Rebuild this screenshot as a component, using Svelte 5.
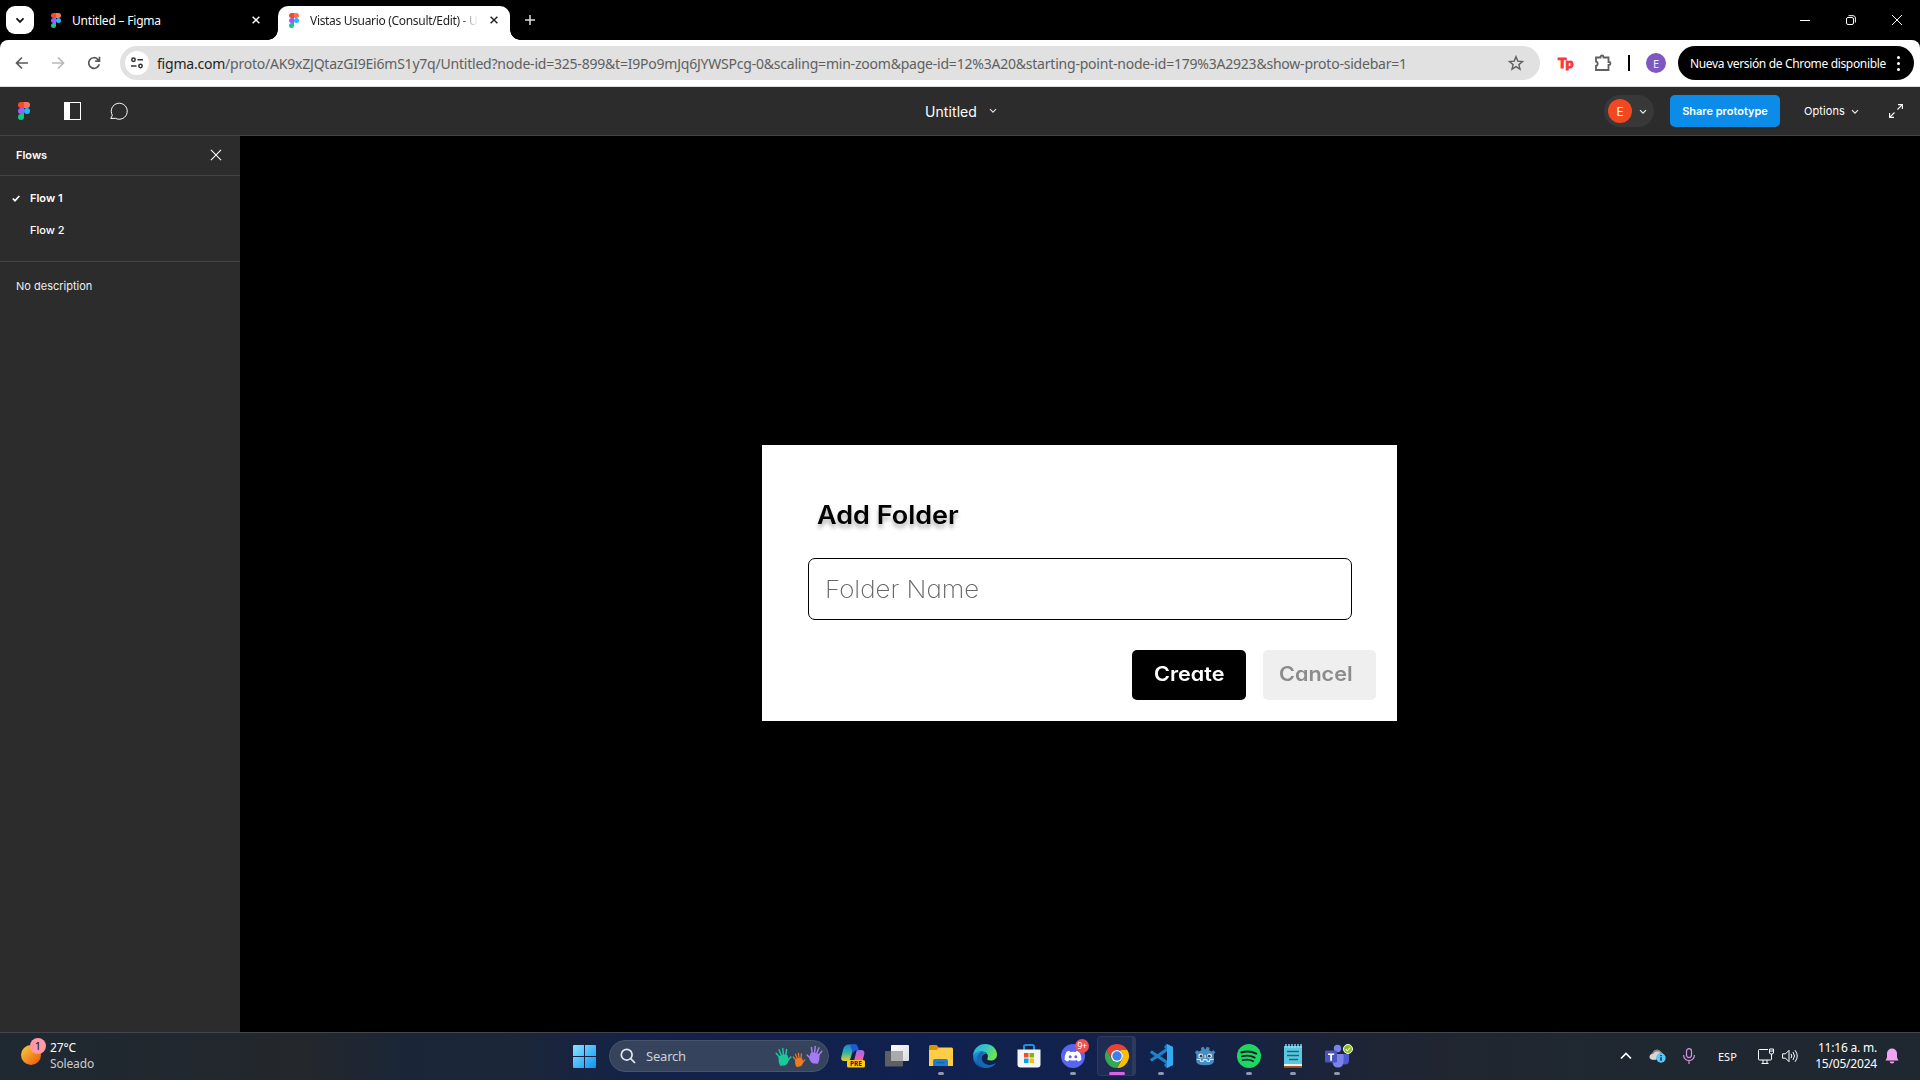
<script>
  const url = '/proto/AK9xZJQtazGI9Ei6mS1y7q/Untitled?node-id=325-899&t=I9Po9mJq6JYWSPcg-0&scaling=min-zoom&page-id=12%3A20&starting-point-node-id=179%3A2923&show-proto-sidebar=1';
  const apps = ['copilot', 'taskview', 'files', 'edge', 'store', 'discord', 'chrome', 'vscode', 'godot', 'spotify', 'notepad', 'teams'];
  const running = new Set(['files', 'discord', 'vscode', 'spotify', 'notepad', 'teams']);
</script>

{#snippet figma(cls)}
  <svg class={cls} viewBox="0 0 20 30">
    <path d="M10 0H5a5 5 0 0 0 0 10h5z" fill="#f24e1e" />
    <path d="M10 0h5a5 5 0 0 1 0 10h-5z" fill="#ff7262" />
    <path d="M10 10H5a5 5 0 0 0 0 10h5z" fill="#a259ff" />
    <circle cx="15" cy="15" r="5" fill="#1abcfe" />
    <path d="M10 20H5a5 5 0 1 0 5 5z" fill="#0acf83" />
  </svg>
{/snippet}

{#snippet cross(cls)}
  <svg class={cls} viewBox="0 0 10 10"><path d="M.8.8l8.4 8.4M9.2.8L.8 9.2" /></svg>
{/snippet}

{#snippet chevron(cls)}
  <svg class={cls} viewBox="0 0 8 6"><path d="M1 1.2l3 3 3-3" /></svg>
{/snippet}

{#snippet hand(cls)}
  <svg class={cls} viewBox="0 0 18 20">
    <path d="M5 11L1.300 6.500M6.800 9L4.300 3M9 8.500L8.200 1.500M11.500 8.500L12.200 2.500M13.500 14l3.300-3.500" />
    <path class="palm" d="M4.500 10.500q4-2.300 8-1.500l1.300 4q-.5 4.500-3.800 5.700l-4 .3q-1.800-3-1.500-8.500z" />
  </svg>
{/snippet}

<div class="screen">
  <header class="tabs">
    <button class="tab-search" aria-label="Search tabs">{@render chevron('i-tabs')}</button>
    <div class="tab">
      {@render figma('fav')}
      <span class="tab-title t1">Untitled – Figma</span>
      {@render cross('tab-x')}
    </div>
    <div class="tab active">
      {@render figma('fav')}
      <span class="tab-title t2">Vistas Usuario (Consult/Edit) - U</span>
      {@render cross('tab-x')}
    </div>
    <svg class="plus" viewBox="0 0 10 10"><path d="M5 0v10M0 5h10" /></svg>
    <div class="window">
      <svg viewBox="0 0 10 10"><path d="M0 5.500h10" /></svg>
      <svg viewBox="0 0 10 10"><rect x=".5" y="2.500" width="7" height="7" rx="1.500" /><path d="M2.500.7H7A2.400 2.400 0 0 1 9.400 3v4.500" /></svg>
      <svg viewBox="0 0 10 10"><path d="M0 0l10 10M10 0L0 10" /></svg>
    </div>
  </header>

  <div class="toolbar-wrap">
    <div class="toolbar">
      <svg class="nav" viewBox="0 0 14 14"><path d="M13 7H2M7 1.500L1.500 7 7 12.500" /></svg>
      <svg class="nav dim" viewBox="0 0 14 14"><path d="M1 7h11M7 1.500L12.500 7 7 12.500" /></svg>
      <svg class="nav" viewBox="0 0 14 14"><path d="M12.200 8.200A5.300 5.300 0 1 1 10.800 3.300L12.300 4.800M12.500.8v4.400H8.200" /></svg>
      <div class="omnibox">
        <span class="site">
          <svg viewBox="0 0 12 12"><circle cx="2.500" cy="2.800" r="1.700" /><path d="M6.500 2.800H12M0 9h5.500" /><circle cx="9.500" cy="9" r="1.700" /></svg>
        </span>
        <span class="url"><b>figma.com</b>{url}</span>
        <svg class="star" viewBox="0 0 16 16"><path d="M8 1.700l1.800 4.400 4.700.4-3.600 3.100 1.100 4.600L8 11.700l-4 2.500 1.100-4.600L1.500 6.500l4.700-.4z" /></svg>
      </div>
      <span class="tp"><i>T</i><i class="p">p</i></span>
      <svg class="puzzle" viewBox="0 0 18 18"><path d="M2 3.500h4.500V3a1.500 1.500 0 0 1 3 0v.5h5V8h.5a1.500 1.500 0 0 1 0 3h-.5v5H2v-4.200a2.200 2.200 0 0 0 0-4.300z" /></svg>
      <span class="divider"></span>
      <span class="profile">E</span>
      <div class="update"><span>Nueva versión de Chrome disponible</span><em class="dots"><i></i><i></i><i></i></em></div>
    </div>
  </div>

  <div class="proto-bar">
    {@render figma('logo')}
    <svg class="panel" viewBox="0 0 17 18"><rect x=".5" y=".5" width="16" height="17" fill="none" stroke="#fff" /><path d="M0 0h6v18H0z" fill="#fff" /></svg>
    <svg class="chat" viewBox="0 0 18 18"><path d="M.8 16.500l1.500-3.300A8 8 0 1 1 5.500 16.300z" /></svg>
    <div class="file"><span>Untitled</span>{@render chevron('i-file')}</div>
    <div class="user"><span>E</span>{@render chevron('i-sm')}</div>
    <button class="share"><span>Share prototype</span></button>
    <div class="options"><span>Options</span>{@render chevron('i-sm')}</div>
    <svg class="expand" viewBox="0 0 14 14"><path d="M9 .6h4.400V5M13.400.6L8.500 5.500M5 13.400H.6V9M.6 13.400l4.900-4.900" /></svg>
  </div>

  <main>
    <aside>
      <div class="flows-head"><strong>Flows</strong>{@render cross('close')}</div>
      <ul>
        <li class="current"><svg viewBox="0 0 8 7"><path d="M.8 3.500l2.200 2.200L7.300 1" /></svg>Flow 1</li>
        <li>Flow 2</li>
      </ul>
      <p>No description</p>
    </aside>
    <section class="canvas">
      <div class="dialog">
        <h1><span class="wide">Add Folder</span></h1>
        <div class="field"><span class="wide">Folder Name</span></div>
        <div class="actions">
          <button class="create"><span class="wide">Create</span></button>
          <button class="cancel"><span class="wide">Cancel</span></button>
        </div>
      </div>
    </section>
  </main>

  <footer>
    <div class="weather">
      <span class="sun"><b>1</b></span>
      <div><span>27°C</span><span class="soft">Soleado</span></div>
    </div>
    <div class="center">
      <svg class="win" viewBox="0 0 23 23">
        <defs><linearGradient id="wg" x2="1" y2="1"><stop stop-color="#8be4ff" /><stop offset="1" stop-color="#0a93f5" /></linearGradient></defs>
        <path fill="url(#wg)" d="M0 1q0-1 1-1h10v11H0zM12 0h10q1 0 1 1v10H12zM0 12h11v11H1q-1 0-1-1zM12 12h11v10q0 1-1 1H12z" />
      </svg>
      <div class="search">
        <svg class="lens" viewBox="0 0 16 16"><circle cx="6.700" cy="6.700" r="5.400" /><path d="M10.700 10.700l4.300 4.300" /></svg>
        <span>Search</span>
        <div class="hands">{@render hand('h1')}{@render hand('h2')}{@render hand('h3')}</div>
      </div>
      <div class="apps">
        {#each apps as app}
          <div class="app {app}" class:running={running.has(app)}>
            <svg viewBox="0 0 24 24">
              {#if app === 'copilot'}
                <defs>
                  <linearGradient id="c1" x2="0" y2="1"><stop stop-color="#1784d8" /><stop offset=".5" stop-color="#33b5a0" /><stop offset="1" stop-color="#e9d02c" /></linearGradient>
                  <linearGradient id="c2" x2="0" y2="1"><stop stop-color="#9b6df0" /><stop offset=".5" stop-color="#e45fb0" /><stop offset="1" stop-color="#ff8b62" /></linearGradient>
                </defs>
                <path fill="url(#c2)" d="M16 6h4q4 0 3.300 4l-2 8q-1 4-5 4H9q3-1 4-5l2-8q.5-2 1-3z" />
                <path fill="url(#c1)" d="M8 .5h8q-3 1-4 5l-2.500 9Q8.600 17 6 17H3q-3.500 0-2.700-4l2-8Q3.400.5 8 .5z" />
                <path fill="#2457d6" d="M9 .5h5q2.500 0 3 2.500l1 3.500h-3q-2 0-3 3z" />
                <rect x="6" y="16" width="18" height="7.500" rx="1.500" fill="#ffc814" />
                <text x="15" y="22.200" text-anchor="middle" font-size="6.500" font-weight="700" fill="#222">PRE</text>
              {:else if app === 'taskview'}
                <defs><linearGradient id="tv" x2="1" y2="1"><stop stop-color="#fff" /><stop offset="1" stop-color="#d9dadf" /></linearGradient></defs>
                <rect x="6" y="1" width="18" height="16" rx="1" fill="url(#tv)" />
                <rect x="0" y="7" width="18" height="15.500" rx="1" fill="#5d5f63" />
                <path fill="#a9aaac" d="M6 7h11q1 0 1 1v9H6z" />
              {:else if app === 'files'}
                <path fill="#d99400" d="M0 2.500Q0 1 1.500 1h6L10 3.500V8H0z" />
                <path fill="#ffce47" d="M0 6h7.500L10 3.500h12.500q1.500 0 1.500 1.500v17H0z" />
                <path fill="#1a7fd6" d="M4 22v-5q0-2 2-2h11q2 0 2 2v5z" />
                <path fill="#1260a8" d="M7.500 18h8v1.200h-8z" />
              {:else if app === 'edge'}
                <defs>
                  <linearGradient id="e1" x2="1" y2=".5"><stop stop-color="#29a9e5" /><stop offset=".55" stop-color="#35c9c0" /><stop offset="1" stop-color="#6fe34f" /></linearGradient>
                  <linearGradient id="e2" x2="0" y2="1"><stop stop-color="#1d9ce0" /><stop offset="1" stop-color="#0b4fa3" /></linearGradient>
                </defs>
                <path fill="url(#e1)" d="M.2 10.500C1 4.500 5.800 0 12 0c7 0 12 4.800 12 10.500 0 4-3 6-6.300 6-2.600 0-4-.8-3.200-2.200C16 11 13.500 7.500 9 7.500 4.500 7.500 1 9.500.2 13z" />
                <path fill="url(#e2)" d="M.1 13C.3 9.500 4 7.500 8 7.500c3 0 5 1.300 5.800 2.500-3-.8-5.500 1.500-5.500 4.500 0 4.500 4.500 7.500 9.500 6.500 1.500-.3 3-1 4-1.600.5-.3.900.2.600.6C20 22.600 16 24 12 24 5 24 0 19 .1 13z" />
                <path fill="#1767b5" d="M9 7.600C5 9 3.500 13 4.500 17c1 3.800 4.500 6.500 8.500 7 4.500.1 8-2.200 9.500-4.500-4 2.200-9.500 2-12.200-1.300-2.600-3.200-1.500-7 2-8.200z" />
              {:else if app === 'store'}
                <path d="M7 6V2.500Q7 1 8.500 1h7Q17 1 17 2.500V6" fill="none" stroke="#1b91dc" stroke-width="2" />
                <path fill="#f5f5f5" d="M.5 5.500h23v15q0 3-3 3h-17q-3 0-3-3z" />
                <path fill="#f25022" d="M7 9h4.500v4.500H7z" /><path fill="#7fba00" d="M12.500 9H17v4.500h-4.500z" />
                <path fill="#00a4ef" d="M7 14.500h4.500V19H7z" /><path fill="#ffb900" d="M12.500 14.500H17V19h-4.500z" />
              {:else if app === 'discord'}
                <circle cx="12" cy="12" r="12" fill="#5865f2" />
                <path fill="#fff" d="M8.500 6.800q-2 .3-3 1-2 3.700-1.900 8 1.700 1.400 3.500 1.700l1-1.500q4 1.200 7.800 0l1 1.500q1.800-.3 3.500-1.700.1-4.300-1.900-8-1.400-.8-3-1l-.6 1.100q-3-.4-5.800 0z" />
                <circle cx="9.200" cy="12.700" r="1.500" fill="#5865f2" /><circle cx="14.800" cy="12.700" r="1.500" fill="#5865f2" />
              {:else if app === 'chrome'}
                <path fill="#ea4335" d="M1.600 6A12 12 0 0 1 22.400 6H12a6 6 0 0 0-5.200 9z" />
                <path fill="#fbbc05" d="M22.400 6A12 12 0 0 1 12 24l5.200-9A6 6 0 0 0 17.200 9L15 6z" />
                <path fill="#34a853" d="M12 24A12 12 0 0 1 1.600 6l5.200 9a6 6 0 0 0 10.400 0z" />
                <circle cx="12" cy="12" r="6" fill="#fff" /><circle cx="12" cy="12" r="4.700" fill="#3b80ee" />
              {:else if app === 'vscode'}
                <path fill="none" stroke="#1c83cc" stroke-width="3.200" stroke-linejoin="round" d="M18 18.500L1.800 7.500M18 5.500L1.800 16.500" />
                <path fill="#1686d0" d="M17.500 0L24 3v18l-6.500 3L15 21l3-3V6l-3-3z" />
                <path fill="#35a9f2" d="M18 0l6 3v18l-6 3z" />
              {:else if app === 'godot'}
                <path fill="#478cbf" d="M1 8l2.200-2.300 2.200 1.400L8 5.800 7.600 3l3-1.200 1.200 2.700h.9l1.200-2.700L17 3l-.4 2.800 2.500 1.300 2.200-1.400L23.300 8l-1.700 2v8q0 4-9.500 4t-9.500-4v-8z" />
                <circle cx="7.300" cy="12" r="2.700" fill="#dce8ef" /><circle cx="17" cy="12" r="2.700" fill="#dce8ef" />
                <circle cx="7.700" cy="12.200" r="1.500" fill="#333e48" /><circle cx="16.600" cy="12.200" r="1.500" fill="#333e48" />
                <path stroke="#dce8ef" stroke-width="1.200" fill="none" d="M12.100 11v3.500M2.700 15.500l4.300.5.4 2h2.400l.4-2h3.800l.4 2h2.400l.4-2 4.300-.5" />
              {:else if app === 'spotify'}
                <circle cx="12" cy="12" r="12" fill="#1ed760" />
                <path fill="none" stroke="#12202c" stroke-linecap="round" stroke-width="2.200" d="M4.500 8.400q8-2.300 14.700 1.200" />
                <path fill="none" stroke="#12202c" stroke-linecap="round" stroke-width="1.900" d="M5 12.400q7-2 12.700 1.200" />
                <path fill="none" stroke="#12202c" stroke-linecap="round" stroke-width="1.600" d="M5.600 16.200q6-1.500 10.700 1" />
              {:else if app === 'notepad'}
                <path fill="#5cc8e0" d="M3 2h18v18H3z" /><path fill="#eceff1" d="M3 20h18v2H3z" /><path fill="#a8591f" d="M3 22h18v1.800H3z" />
                <path stroke="#17677f" stroke-width="1.400" d="M6 7.500h12M6 11.500h12M8 15.500h9" />
                <path stroke="#9fe4f2" stroke-width="1.300" d="M5 0v4M8 0v4M11 0v4M14 0v4M17 0v4M20 0v4" />
              {:else if app === 'teams'}
                <circle cx="12.500" cy="4.500" r="3.700" fill="#7b83eb" /><circle cx="21" cy="7" r="2.300" fill="#5059c9" />
                <path fill="#5059c9" d="M16 10h8v6.500q0 4-4 4t-4-4z" />
                <path fill="#7b83eb" d="M8 10h10.500v7.500q0 6-5.500 6t-5.500-6z" />
                <rect y="6.500" width="12" height="12" rx="1" fill="#4b53bc" />
                <path fill="#fff" d="M3 9.500h6.200V11H7v5.800H5.200V11H3z" />
              {/if}
            </svg>
            {#if app === 'discord'}<b class="count">9+</b>{/if}
            {#if app === 'teams'}
              <svg class="ok" viewBox="0 0 10 10"><circle cx="5" cy="5" r="4.500" fill="#8cbd18" stroke="#fff" /><path d="M2.700 5.200l1.700 1.600 3-3.300" fill="none" stroke="#fff" stroke-width="1.100" /></svg>
            {/if}
          </div>
        {/each}
      </div>
    </div>
    <div class="tray">
      <svg class="up" viewBox="0 0 12 8"><path d="M1 6.500l5-5 5 5" /></svg>
      <svg class="cloud" viewBox="0 0 18 14">
        <path fill="#888" d="M4 10.500a4 4 0 0 1-.5-7A5 5 0 0 1 12.500 3l2 2.500-4 5z" /><path fill="#d6d6d6" d="M3.500 10.800q-3-.5-3-3T4 5q3-4 7.500-1.500Q8 5 7 10.800z" />
        <circle cx="12" cy="9" r="4.700" fill="#5ac8fa" /><path class="info" d="M12 6v1.300M12 8.200v3.600" />
      </svg>
      <svg class="mic" viewBox="0 0 12 16"><rect x="3.500" y=".6" width="5" height="9" rx="2.500" /><path d="M.7 7v.8a5.300 4.700 0 0 0 10.600 0V7M6 12.500V16" /></svg>
      <span class="lang">ESP</span>
      <svg class="net" viewBox="0 0 16 16"><path d="M10 1.500H1.500q-1 0-1 1v8.500q0 1 1 1h11q1 0 1-1V8M5 12v3.500M9 12v3.500M3.500 15.500h7M11.500 1h4v4q0 1-2 1t-2-1zM13.500 6v2.500M11.500 3h4" /></svg>
      <svg class="vol" viewBox="0 0 17 14"><path d="M.6 4.800h2.900L7 1.300v11.400L3.500 9.200H.6zM9 4.800q1.600 2.200 0 4.400M11 3q3 4 0 8M13 1.200q4.500 5.800 0 11.600" /></svg>
      <div class="clock"><span class="time">11:16 a. m.</span><span class="date">15/05/2024</span></div>
      <svg class="bell" viewBox="0 0 14 16"><path d="M7 .5a5 5 0 0 1 5 5v4l1.500 3H.5l1.500-3v-4a5 5 0 0 1 5-5zM4.700 13.400h4.600a2.300 2 0 0 1-4.600 0z" /></svg>
    </div>
  </footer>
</div>

<style>
  :global(body) { margin: 0; background: #000; }
  * { box-sizing: border-box; }
  svg { display: block; flex: none; overflow: visible; }
  button { border: 0; padding: 0; font: inherit; }
  .screen { width: 1920px; height: 1080px; display: flex; flex-direction: column; overflow: hidden; background: #000; font-family: "Noto Sans", "Open Sans", sans-serif; font-size: 12px; white-space: nowrap; }

  .tabs { height: 40px; display: flex; align-items: center; padding-left: 6px; color: #fff; flex: none; }
  .tab-search { width: 28px; height: 28px; border-radius: 9px; background: #fff; display: grid; place-items: center; margin-right: 5px; }
  .i-tabs { width: 10px; height: 7px; fill: none; stroke: #111; stroke-width: 1.5; }
  .tab { display: flex; align-items: center; width: 239px; height: 34px; padding: 0 18px 6px 12px; align-self: flex-end; }
  .tab.active { width: 232px; padding: 0 12px 6px 11px; background: #fff; color: #1f1f1f; border-radius: 10px 10px 0 0; position: relative; }
  .tab.active::before, .tab.active::after { content: ""; position: absolute; bottom: 0; width: 10px; height: 10px; background: radial-gradient(circle at 0 0, transparent 9.5px, #fff 10px); left: -10px; }
  .tab.active::after { left: auto; right: -10px; background: radial-gradient(circle at 100% 0, transparent 9.5px, #fff 10px); }
  .fav { width: 10px; height: 15px; margin-right: 11px; }
  .tab-title { flex: 1; overflow: hidden; padding-top: 2px; line-height: 20px; }
  .t1 { letter-spacing: -.2px; }
  .t2 { letter-spacing: -.32px; margin-right: 8px; mask-image: linear-gradient(90deg, #000 148px, transparent 168px); }
  .tab-x { width: 8px; height: 8px; stroke: currentColor; stroke-width: 1.8; }
  .plus { width: 10px; height: 10px; stroke: #ddd; stroke-width: 1.5; margin-left: 15px; }
  .window { margin-left: auto; display: flex; gap: 36px; padding-right: 18px; }
  .window svg { width: 10px; height: 10px; fill: none; stroke: #fff; }

  .toolbar-wrap { background: #000; flex: none; }
  .toolbar { height: 47px; background: #fff; border-radius: 8px 8px 0 0; border-bottom: 1px solid #dcdcdc; display: flex; align-items: center; padding: 0 6px 0 15px; }
  .nav { width: 14px; height: 14px; fill: none; stroke: #5a5a5a; stroke-width: 1.7; margin-right: 22px; }
  .nav.dim { stroke: #b9b9b9; }
  .omnibox { width: 1420px; height: 34px; margin-left: -3px; border-radius: 17px; background: #e1e1e1; display: flex; align-items: center; padding: 0 16px 0 5px; }
  .site { width: 24px; height: 24px; border-radius: 50%; background: #fff; display: grid; place-items: center; margin-right: 8px; }
  .site svg { width: 12px; height: 12px; fill: none; stroke: #333; stroke-width: 1.5; }
  .url { font-size: 14px; color: #606060; flex: 1; letter-spacing: -.216px; }
  .url b { font-weight: 400; color: #1f1f1f; }
  .star { width: 16px; height: 16px; fill: none; stroke: #606060; stroke-width: 1.4; }
  .tp { width: 16px; margin-left: 18px; color: #f8383c; font: 900 14px/16px "Lato", sans-serif; display: flex; }
  .tp i { font-style: normal; -webkit-text-stroke: 1px #f8383c; }
  .tp .p { margin-left: -1px; }
  .puzzle { width: 18px; height: 18px; margin-left: 20px; fill: none; stroke: #5f5f5f; stroke-width: 1.8; }
  .divider { width: 2px; height: 16px; background: #000; margin-left: 16px; }
  .profile { width: 20px; height: 20px; border-radius: 50%; background: #7e57c2; color: #eee; font-size: 11px; display: grid; place-items: center; margin-left: 16px; }
  .update { width: 236px; height: 34px; margin-left: 12px; border-radius: 17px; background: #000; color: #fff; display: flex; align-items: center; justify-content: space-between; padding: 0 14px 0 12px; letter-spacing: -.34px; }
  .dots { display: grid; gap: 3px; }
  .dots i { width: 3px; height: 3px; border-radius: 50%; background: #fff; }

  .proto-bar { height: 49px; flex: none; background: #2c2c2c; border-bottom: 1px solid #444; display: flex; align-items: center; color: #fff; font-family: Inter, sans-serif; font-size: 11px; padding-left: 18px; }
  .logo { width: 12px; height: 18px; }
  .panel { width: 17px; height: 18px; margin-left: 34px; }
  .chat { width: 18px; height: 18px; margin-left: 29px; fill: none; stroke: #fff; stroke-width: 1; }
  .file { margin-left: 797px; width: 679px; display: flex; align-items: center; font-size: 14px; }
  .file span { width: 64px; letter-spacing: .08px; }
  .i-file { width: 8px; height: 6px; fill: none; stroke: #ddd; stroke-width: 1.2; }
  .user { width: 50px; height: 32px; border-radius: 16px; background: #383838; display: flex; align-items: center; gap: 7px; padding-left: 4px; }
  .user span { width: 24px; height: 24px; border-radius: 50%; background: #f24822; display: grid; place-items: center; font-size: 12px; }
  .i-sm { width: 8px; height: 6px; fill: none; stroke: #eee; stroke-width: 1.2; position: relative; top: 1px; }
  .share { margin-left: 16px; width: 110px; height: 32px; border-radius: 5px; background: #0c8ce9; color: #fff; font-weight: 600; }
  .options { margin-left: 24px; width: 85px; display: flex; align-items: center; gap: 6px; letter-spacing: .1px; }
  .expand { width: 14px; height: 14px; fill: none; stroke: #fff; stroke-width: 1.1; }

  main { flex: 1; display: flex; min-height: 0; }
  aside { width: 240px; background: #2c2c2c; color: #fff; font-family: Inter, sans-serif; font-size: 11px; }
  .flows-head { height: 40px; border-bottom: 1px solid #444; display: flex; align-items: center; justify-content: space-between; padding: 0 18px 2px 16px; }
  strong { font-weight: 600; }
  .close { width: 12px; height: 12px; stroke: #fff; stroke-width: .9; }
  ul { list-style: none; margin: 0; padding: 6px 0 15px; border-bottom: 1px solid #444; }
  li { height: 32px; line-height: 32px; padding-left: 30px; font-weight: 500; }
  li.current { padding-left: 12px; display: flex; align-items: center; font-weight: 600; }
  li svg { width: 8px; height: 7px; fill: none; stroke: #fff; stroke-width: 1.7; margin-right: 10px; }
  p { margin: 0; padding: 16px; line-height: 16px; color: #eee; }

  .canvas { flex: 1; background: #000; padding: 309px 0 0 522px; }
  .dialog { width: 635px; height: 276px; background: #fff; font-family: Inter, sans-serif; font-feature-settings: "cv11"; padding: 52px 21px 0 46px; }
  .wide { display: inline-block; transform: scaleX(1.08); transform-origin: 0 50%; }
  h1 { margin: 0 0 25px 9px; height: 36px; line-height: 36px; font-size: 25px; font-weight: 600; color: #000; text-shadow: 0 4px 4px rgba(0, 0, 0, .3); }
  .field { width: 544px; height: 62px; border: 1px solid #000; border-radius: 7px; padding-left: 16px; line-height: 62px; font-size: 24px; font-weight: 200; color: #666; }
  .actions { display: flex; justify-content: flex-end; gap: 17px; margin-top: 30px; }
  .actions button { height: 50px; border-radius: 5px; font-size: 20px; font-weight: 600; line-height: 48px; padding-bottom: 2px; text-align: left; }
  .actions .create { width: 114px; background: #000; color: #fff; padding-left: 22px; }
  .actions .cancel { width: 113px; background: #efefef; color: #8c8c8c; padding-left: 16px; }

  footer { height: 48px; flex: none; border-top: 1px solid #44464b; background: linear-gradient(90deg, #1e2931 0, #24272c 16%, #1a2637 21%, #1b2638 27%, #142248 33%, #102150 48%, #13224a 62%, #1c2436 70%, #212630 76%, #1f2830 84%, #1f2831 100%); display: flex; align-items: center; color: #fff; padding-bottom: 1px; }
  .weather { display: flex; width: 573px; padding-left: 21px; align-items: center; }
  .weather div, .clock { display: flex; flex-direction: column; line-height: 16px; }
  .weather div { letter-spacing: -.15px; }
  .soft { color: #ccc; }
  .sun { width: 20px; height: 20px; border-radius: 50%; background: linear-gradient(135deg, #f3b83a 20%, #f06a10 80%); position: relative; margin-right: 9px; top: -1px; }
  .sun b { position: absolute; left: 9px; top: -7px; width: 16px; height: 16px; border-radius: 50%; background: #ff99a4; color: #111; font: 11px/16px "Noto Sans", sans-serif; text-align: center; }
  .center { display: flex; align-items: center; width: 1047px; }
  .win { width: 23px; height: 23px; }
  .search { width: 220px; height: 32px; margin-left: 13px; border-radius: 16px; background: #36435d; border: 1px solid #48546b; display: flex; align-items: center; padding: 0 5px 0 10px; color: #ccd0d8; font-size: 13px; }
  .search span { width: 129px; letter-spacing: -.2px; }
  .lens { width: 16px; height: 16px; fill: none; stroke: #e6e8ec; stroke-width: 1.7; margin-right: 10px; }
  .hands { display: flex; align-items: center; }
  .hands :global(svg) { fill: currentColor; stroke: currentColor; stroke-width: 1.6; stroke-linecap: round; width: 17px; height: 19px; }
  .hands :global(.h1) { color: #18c99a; }
  .hands :global(.h2) { color: #ee7b22; width: 14px; height: 15px; margin: 6px 0 0; }
  .hands :global(.h3) { color: #a67bf0; margin: 0 0 4px; transform: scaleX(-1); }
  .apps { display: flex; margin-left: 3px; }
  .app { width: 44px; height: 40px; display: grid; place-items: center; position: relative; left: -1px; }
  .app > svg { width: 24px; height: 24px; }
  .app text { font-family: "Noto Sans", sans-serif; }
  .godot > svg { width: 22px; height: 22px; }
  .running::after, .chrome::after { content: ""; position: absolute; bottom: 1px; left: 19px; width: 6px; height: 3px; border-radius: 2px; background: #8f98ad; }
  .chrome::before { content: ""; position: absolute; inset: 0 3px 0 2px; border: 1px solid #2e3a5c; border-right-width: 4px; border-radius: 4px; background: rgba(255, 255, 255, .05); }
  .chrome > svg { position: relative; }
  .chrome::after { width: 16px; left: 14px; background: #dc62e8; }
  .count { position: absolute; left: 24px; top: 3px; width: 14px; height: 14px; border-radius: 7px; background: #f0504e; font: 9px/14px "Noto Sans", sans-serif; text-align: center; letter-spacing: -.5px; }
  .app .ok { position: absolute; left: 28px; top: 8px; width: 10px; height: 10px; }
  .tray { display: flex; align-items: center; }
  .tray svg { fill: none; stroke: #fff; stroke-width: 1; }
  .tray .up { width: 12px; height: 8px; stroke-width: 1.7; }
  .tray .cloud { width: 18px; height: 14px; margin-left: 17px; stroke: none; }
  .info { stroke: #112233; stroke-width: 1.4; }
  .tray .mic { width: 12px; height: 16px; margin-left: 16px; stroke: #dd91e0; stroke-width: 1.2; }
  .lang { width: 40px; margin-left: 23px; font-size: 11px; }
  .net { width: 16px; height: 16px; }
  .vol { width: 17px; height: 14px; margin-left: 8px; }
  .clock { text-align: right; width: 78px; font-size: 12px; letter-spacing: -.2px; }
  .tray .bell { width: 14px; height: 16px; margin-left: 8px; fill: #f0a5f2; stroke: none; }
</style>
